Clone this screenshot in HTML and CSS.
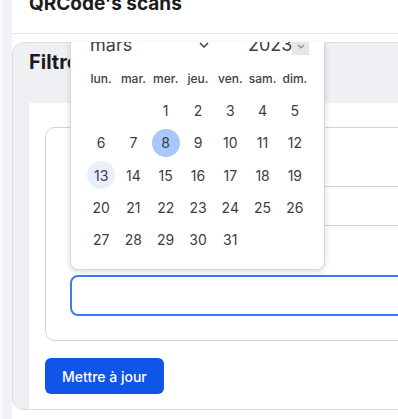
FILE: index.html
```html
<!DOCTYPE html>
<html>
  <head>
    <title>QRCode's scans</title>
    <link rel="stylesheet" href="styles.css">
  </head>
  <body>
    <div class="page">
      <div class="gutter"></div>
      <main class="main">
        <h1 class="page-title">QRCode's scans</h1>

        <section class="card">
          <div class="card-header">Filtres</div>
          <div class="card-body">
            <div class="filter-box">
              <div class="field">
                <input class="field-input" type="text" aria-label="Date de début" />
              </div>
              <div class="field">
                <input class="field-input is-focused" type="text" aria-label="Date de fin" />
              </div>
            </div>
            <button class="btn btn-primary">Mettre à jour</button>
          </div>
        </section>
      </main>

      <!-- Date picker popup opened from the second field -->
      <div class="picker">
        <div class="picker-head">
          <div class="picker-month">
            <span>mars</span>
            <svg class="chevron" width="10" height="6" viewBox="0 0 10 6">
              <polyline points="1 1 5 5 9 1" fill="none" stroke="#3c4043" stroke-width="1.5" />
            </svg>
          </div>
          <div class="picker-year">
            <span>2023</span>
            <span class="year-arrow">
              <svg width="8" height="5" viewBox="0 0 8 5">
                <polyline points="1 1 4 4 7 1" fill="none" stroke="#8a8b90" stroke-width="1.2" />
              </svg>
            </span>
          </div>
        </div>
        <div class="picker-grid">
          <div class="weekday">lun.</div>
          <div class="weekday">mar.</div>
          <div class="weekday">mer.</div>
          <div class="weekday">jeu.</div>
          <div class="weekday">ven.</div>
          <div class="weekday">sam.</div>
          <div class="weekday">dim.</div>

          <div class="day first-day"><span>1</span></div>
          <div class="day"><span>2</span></div>
          <div class="day"><span>3</span></div>
          <div class="day"><span>4</span></div>
          <div class="day"><span>5</span></div>
          <div class="day"><span>6</span></div>
          <div class="day"><span>7</span></div>
          <div class="day selected"><span>8</span></div>
          <div class="day"><span>9</span></div>
          <div class="day"><span>10</span></div>
          <div class="day"><span>11</span></div>
          <div class="day"><span>12</span></div>
          <div class="day today"><span>13</span></div>
          <div class="day"><span>14</span></div>
          <div class="day"><span>15</span></div>
          <div class="day"><span>16</span></div>
          <div class="day"><span>17</span></div>
          <div class="day"><span>18</span></div>
          <div class="day"><span>19</span></div>
          <div class="day"><span>20</span></div>
          <div class="day"><span>21</span></div>
          <div class="day"><span>22</span></div>
          <div class="day"><span>23</span></div>
          <div class="day"><span>24</span></div>
          <div class="day"><span>25</span></div>
          <div class="day"><span>26</span></div>
          <div class="day"><span>27</span></div>
          <div class="day"><span>28</span></div>
          <div class="day"><span>29</span></div>
          <div class="day"><span>30</span></div>
          <div class="day"><span>31</span></div>
        </div>
      </div>
    </div>
  </body>
</html>
```

FILE: styles.css
```css
:root {
  --primary-color: #0f55e8;
  --focus-color: #3b7cf2;
  --bg-muted: #eff0f4;
  --border-color: #dcdde2;
  --border-input: #cfd1d6;
  --text-primary: #1c1c1f;
  --text-picker: #3c4043;
}

html,
body {
  margin: 0;
  height: 100%;
  overflow: hidden;
}

body {
  font-family: Inter, 'Noto Sans', sans-serif;
  color: var(--text-primary);
  background: #fff;
}

/* Page frame */
.page {
  position: relative;
  display: flex;
  height: 100%;
}

.gutter {
  width: 12px;
  flex-shrink: 0;
  background: linear-gradient(to right, #fafafb 0 3px, #f1f2f5 3px);
}

.main {
  flex: 1;
  min-width: 0;
  overflow: hidden;
  background: #fff;
}

.page-title {
  margin: -8px 0 0;
  padding: 0 17px 17px;
  font-size: 19px;
  line-height: 24px;
  font-weight: 700;
  border-bottom: 1px solid #e4e5e9;
}

/* Filter card */
.card {
  width: 480px;
  margin-top: 8px;
  background: var(--bg-muted);
  border: 1px solid var(--border-color);
  border-radius: 12px 0 0 12px;
}

.card-header {
  padding: 5px 16px 27px;
  font-size: 20px;
  line-height: 28px;
  font-weight: 700;
}

.card-body {
  margin-left: 16px;
  padding: 24px 16px 15px;
  background: #fff;
}

.filter-box {
  display: flex;
  flex-direction: column;
  gap: 49px;
  padding: 58px 24px 24px;
  border: 1px solid #d2d3d8;
  border-radius: 10px;
}

.field {
  display: flex;
  flex-direction: column;
}

.field-input {
  box-sizing: border-box;
  width: 100%;
  height: 40px;
  padding: 0 12px;
  border: 1px solid var(--border-input);
  border-radius: 8px;
  font-family: inherit;
  font-size: 14px;
  color: var(--text-primary);
  outline: none;
}
.field-input.is-focused {
  height: 41px;
  border: 2px solid var(--focus-color);
}

/* Buttons */
.btn {
  border: none;
  cursor: pointer;
  font-family: inherit;
}

.btn-primary {
  height: 36px;
  margin-top: 17px;
  padding: 0 17px;
  background: var(--primary-color);
  color: #fff;
  font-size: 14px;
  font-weight: 500;
  border-radius: 6px;
}

/* Date picker popup */
.picker {
  position: absolute;
  left: 70px;
  top: 42px;
  box-sizing: border-box;
  width: 255px;
  height: 228px;
  padding: 0 13px 0 14px;
  background: #fff;
  border: 1px solid #d5d7dc;
  border-top: none;
  border-radius: 0 0 8px 8px;
  box-shadow: 0 2px 6px rgba(0, 0, 0, 0.14);
  overflow: hidden;
  color: var(--text-picker);
}

.picker-head {
  display: flex;
  align-items: center;
  height: 24px;
  margin: -9px 0 5px;
  font-size: 18px;
  line-height: 24px;
}

.picker-month {
  display: flex;
  align-items: center;
  width: 120px;
  margin-left: 5px;
}
.picker-month .chevron {
  margin-left: auto;
  margin-right: 1px;
}

.picker-year {
  display: flex;
  align-items: center;
  margin-left: 38px;
}

.year-arrow {
  display: flex;
  align-items: center;
  justify-content: center;
  width: 17px;
  height: 18px;
  margin-top: 2px;
  background: #e6e6ea;
}

.picker-grid {
  display: grid;
  grid-template-columns: repeat(7, 1fr);
  grid-auto-rows: 32.3px;
  width: 226px;
}

.weekday {
  display: flex;
  align-items: center;
  justify-content: center;
  font-size: 12px;
  font-weight: 500;
}

.day {
  display: flex;
  align-items: center;
  justify-content: center;
  font-size: 14px;
}
.day span {
  display: flex;
  align-items: center;
  justify-content: center;
  width: 28px;
  height: 28px;
  border-radius: 50%;
}
.day.first-day {
  grid-column-start: 3;
}
.day.selected span {
  background: #a8c7fa;
}
.day.today span {
  background: #e8f0fe;
}
```
